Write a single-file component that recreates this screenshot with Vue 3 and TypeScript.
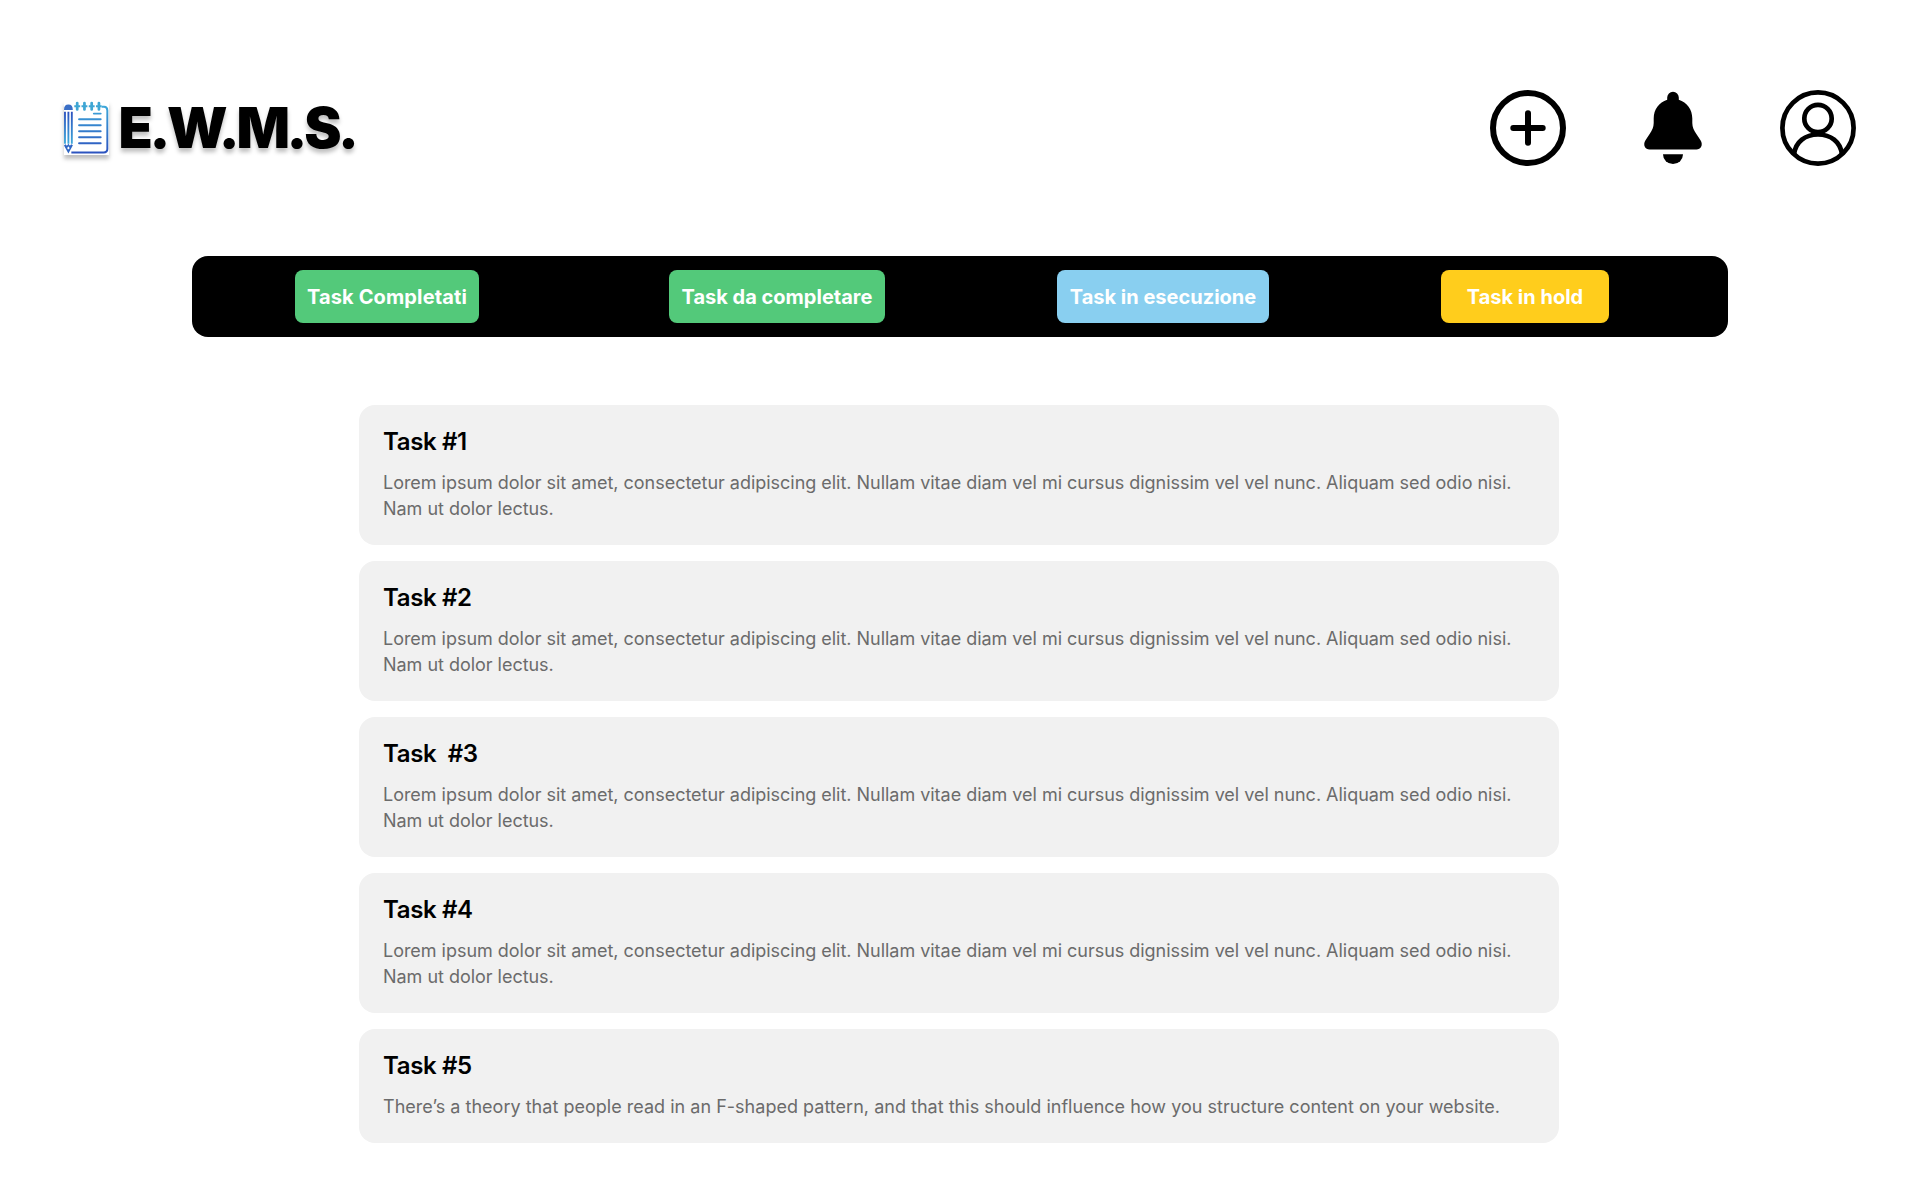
<script setup lang="ts">
interface Filter {
  label: string
  kind: string
}

interface Task {
  title: string
  body: string
}

const filters: Filter[] = [
  { label: 'Task Completati', kind: 'done' },
  { label: 'Task da completare', kind: 'todo' },
  { label: 'Task in esecuzione', kind: 'running' },
  { label: 'Task in hold', kind: 'hold' },
]

const lorem =
  'Lorem ipsum dolor sit amet, consectetur adipiscing elit. Nullam vitae diam vel mi cursus dignissim vel vel nunc. Aliquam sed odio nisi. Nam ut dolor lectus.'

const tasks: Task[] = [
  { title: 'Task #1', body: lorem },
  { title: 'Task #2', body: lorem },
  { title: 'Task  #3', body: lorem },
  { title: 'Task #4', body: lorem },
  {
    title: 'Task #5',
    body: 'There’s a theory that people read in an F-shaped pattern, and that this should influence how you structure content on your website.',
  },
]
</script>

<template>
  <div class="page">
    <header class="header">
      <div class="brand">
        <svg class="notepad" viewBox="0 0 46 54" fill="none">
          <defs>
            <linearGradient id="ink" gradientUnits="userSpaceOnUse" x1="0" y1="0" x2="0" y2="54">
              <stop offset="0" stop-color="#3fb0dc" />
              <stop offset="1" stop-color="#2c50be" />
            </linearGradient>
            <linearGradient id="shaft" gradientUnits="userSpaceOnUse" x1="0" y1="10" x2="0" y2="46">
              <stop offset="0" stop-color="#2c50be" />
              <stop offset="1" stop-color="#3fb0dc" />
            </linearGradient>
          </defs>
          <g stroke="url(#ink)" stroke-width="2">
            <path d="M38.5 5.2H41Q44.3 5.3 44.3 9V48.5Q44.3 52 40.500 52H7.500" />
            <path d="M30.5 12.300H37.5M15.400 18H37.500M15.400 24.100H37.500M15.400 30.300H37.500M15.400 36.400H37.500M15.400 42.600H37.500" stroke-linecap="round" />
          </g>
          <path d="M13.500 1.500V8M20.900 1.500V8M28.300 1.500V8M35.700 1.500V8" stroke="#3fa6d4" stroke-width="2.800" stroke-linecap="round" />
          <path d="M10.500 4.800H16.500M17.900 4.800H23.900M25.300 4.800H31.300M32.700 4.800H38.500" stroke="#3fa6d4" stroke-width="2.200" />
          <path d="M0 8.500Q0 3 4.500 3T9 8.500Z" fill="#3b6fc6" />
          <path d="M1 10.500V43M4.500 10.500V43M8 10.500V43" stroke="url(#shaft)" stroke-width="1.900" />
          <path d="M.6 44.300L4.500 51.500L8.400 44.300M1 44L3 46.500L4.500 44.500L6 46.500L8 44M3.200 49.500H5.800" stroke="#2f66c4" stroke-width="1.600" />
        </svg>
        <h1 class="wordmark">E.W.M.S.</h1>
      </div>

      <nav class="actions">
        <svg class="icon" viewBox="0 0 76 76" fill="none" stroke="#000" stroke-width="6">
          <circle cx="38" cy="38" r="35" />
          <path d="M38 23.300V52.700M23.300 38H52.700" stroke-linecap="round" />
        </svg>
        <svg class="icon" viewBox="0 0 76 76">
          <path d="M32.200 9.800V7.500A5.800 5.800 0 0 1 43.800 7.500V9.800C52 12.500 57.300 19.500 57.300 28.500V33C57.300 37.500 59 40.500 61.200 43.800L65.500 50.200C68.600 55.200 65.500 59.500 61.500 59.500H14.500C10.500 59.500 7.400 55.200 10.500 50.200L14.800 43.800C17 40.500 18.700 37.500 18.700 33V28.500C18.700 19.500 24 12.500 32.200 9.800Z" />
          <path d="M28 64.200H48A10 9.800 0 0 1 28 64.200Z" />
        </svg>
        <svg class="icon" viewBox="0 0 76 76" fill="none" stroke="#000" stroke-width="4.700">
          <circle cx="38" cy="38" r="35.600" />
          <circle cx="38" cy="28.500" r="13.700" />
          <path d="M14 64.500C15.500 51.500 25.500 44.500 38 44.500S60.500 51.500 62 64.500" />
        </svg>
      </nav>
    </header>

    <div class="filters">
      <button v-for="f in filters" :key="f.kind" class="filter" :class="f.kind">{{ f.label }}</button>
    </div>

    <main class="tasks">
      <article v-for="t in tasks" :key="t.title" class="task">
        <h2 class="title">{{ t.title }}</h2>
        <p class="body">{{ t.body }}</p>
      </article>
    </main>
  </div>
</template>

<style>
body {
  margin: 0;
  background: #fff;
}
</style>

<style scoped>
.page {
  box-sizing: border-box;
  width: 1920px;
  height: 1200px;
  overflow: hidden;
  background: #fff;
  color: #000;
  font-family: Inter, sans-serif;
}

.header {
  display: flex;
  box-sizing: border-box;
  align-items: center;
  justify-content: space-between;
  height: 256px;
  padding: 0 64px;
}

.brand {
  display: flex;
  align-items: center;
}

.notepad {
  width: 45px;
  height: 54px;
  background: #fff;
  box-shadow: 0 4px 4px rgba(0, 0, 0, 0.25);
}

.wordmark {
  margin: 0 0 0 9.5px;
  font-size: 56px;
  font-weight: 900;
  line-height: 68px;
  letter-spacing: -3.35px;
  text-shadow: 0 4px 4px rgba(0, 0, 0, 0.25);
}

.actions {
  display: flex;
  gap: 69px;
}

.icon {
  display: block;
  width: 76px;
  height: 76px;
}

.filters {
  display: flex;
  box-sizing: border-box;
  align-items: center;
  width: 1536px;
  height: 81px;
  margin: 0 auto;
  padding-left: 103px;
  border-radius: 16px;
  background: #000;
}

.filter {
  box-sizing: border-box;
  height: 53px;
  padding: 0;
  border: 0;
  border-radius: 8px;
  color: #fff;
  font-family: inherit;
  font-size: 20px;
  font-weight: 700;
  white-space: nowrap;
}

.done {
  width: 184px;
  background: #53c97a;
  letter-spacing: 0.12px;
}

.todo {
  width: 216px;
  margin-left: 190px;
  background: #53c97a;
}

.running {
  width: 212px;
  margin-left: 172px;
  background: #89cff0;
}

.hold {
  width: 168px;
  margin-left: 172px;
  background: #ffcd1c;
}

.tasks {
  display: flex;
  flex-direction: column;
  gap: 16px;
  width: 1200px;
  margin: 68px 0 0 359px;
}

.task {
  display: flex;
  flex-direction: column;
  gap: 16px;
  padding: 25px 24px 23px;
  border-radius: 16px;
  background: #f1f1f1;
}

.title {
  margin: 0;
  font-size: 24px;
  font-weight: 600;
  line-height: 24px;
  letter-spacing: -0.36px;
  white-space: pre;
}

.body {
  margin: 0;
  color: #6b6b6b;
  font-size: 18px;
  font-weight: 400;
  line-height: 26px;
  letter-spacing: -0.025px;
}

.task:last-child .body {
  letter-spacing: 0.018px;
}
</style>
